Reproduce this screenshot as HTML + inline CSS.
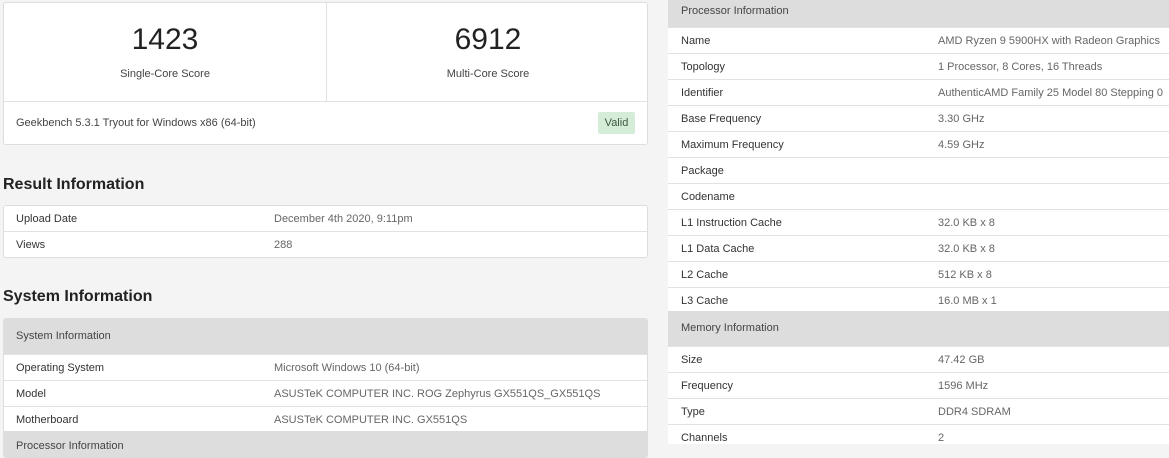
<!DOCTYPE html>
<html><head><style>
body{margin:0;width:1169px;height:444px;background:#f4f4f4;font-family:"Liberation Sans",sans-serif;position:relative;overflow:hidden;color:#333}
.a{position:absolute}
.card{background:#fff;border:1px solid #ddd;border-radius:3px;box-sizing:border-box}
.row{position:absolute;left:0;right:0;height:26px;border-top:1px solid #e2e2e2;font-size:11px;line-height:26px;background:#fff}
.row .l{position:absolute;left:12px}
.row .v{position:absolute;color:#666}
.hd{position:absolute;left:0;right:0;background:#ddd;font-size:11px;color:#444}
h2{position:absolute;margin:0;font-size:16px;font-weight:bold;color:#222}
</style></head><body>
<div class="a card" style="left:3px;top:2px;width:645px;height:143px">
 <div class="a" style="left:322px;top:0;width:1px;height:98px;background:#e2e2e2"></div>
 <div class="a" style="left:0;right:0;top:98px;height:1px;background:#e2e2e2"></div>
 <div class="a" style="left:0;width:322px;top:20px;text-align:center;font-size:30px;color:#222">1423</div>
 <div class="a" style="left:0;width:322px;top:65px;text-align:center;font-size:11px;color:#444">Single-Core Score</div>
 <div class="a" style="left:323px;width:322px;top:20px;text-align:center;font-size:30px;color:#222">6912</div>
 <div class="a" style="left:323px;width:322px;top:65px;text-align:center;font-size:11px;color:#444">Multi-Core Score</div>
 <div class="a" style="left:12px;top:114px;font-size:11px;color:#444">Geekbench 5.3.1 Tryout for Windows x86 (64-bit)</div>
 <div class="a" style="left:594px;top:109px;width:37px;height:22px;background:#d5ecd9;border-radius:2px;font-size:11px;line-height:22px;text-align:center;color:#3a5a3e">Valid</div>
</div>
<h2 style="left:3px;top:176px">Result Information</h2>
<div class="a card" style="left:3px;top:205px;width:645px;height:53px;overflow:hidden">
 <div class="row" style="top:-1px"><span class="l">Upload Date</span><span class="v" style="left:270px">December 4th 2020, 9:11pm</span></div>
 <div class="row" style="top:25px"><span class="l">Views</span><span class="v" style="left:270px">288</span></div>
</div>
<h2 style="left:3px;top:288px">System Information</h2>
<div class="a card" style="left:3px;top:318px;width:645px;height:140px;overflow:hidden;border-color:#ddd">
 <div class="hd" style="top:0;height:35px;line-height:35px;padding-left:12px">System Information</div>
 <div class="row" style="top:35px"><span class="l">Operating System</span><span class="v" style="left:270px">Microsoft Windows 10 (64-bit)</span></div>
 <div class="row" style="top:61px"><span class="l">Model</span><span class="v" style="left:270px">ASUSTeK COMPUTER INC. ROG Zephyrus GX551QS_GX551QS</span></div>
 <div class="row" style="top:87px"><span class="l">Motherboard</span><span class="v" style="left:270px">ASUSTeK COMPUTER INC. GX551QS</span></div>
 <div class="hd" style="top:112px;height:35px;line-height:30px;padding-left:12px">Processor Information</div>
</div>
<div class="a" style="left:668px;top:0;width:501px;height:444px;background:#fff;overflow:hidden">
 <div class="hd" style="top:0;height:27px;line-height:22px;padding-left:13px">Processor Information</div>
 <div class="row" style="top:27px"><span class="l" style="left:13px">Name</span><span class="v" style="left:270px">AMD Ryzen 9 5900HX with Radeon Graphics</span></div>
 <div class="row" style="top:53px"><span class="l" style="left:13px">Topology</span><span class="v" style="left:270px">1 Processor, 8 Cores, 16 Threads</span></div>
 <div class="row" style="top:79px"><span class="l" style="left:13px">Identifier</span><span class="v" style="left:270px">AuthenticAMD Family 25 Model 80 Stepping 0</span></div>
 <div class="row" style="top:105px"><span class="l" style="left:13px">Base Frequency</span><span class="v" style="left:270px">3.30 GHz</span></div>
 <div class="row" style="top:131px"><span class="l" style="left:13px">Maximum Frequency</span><span class="v" style="left:270px">4.59 GHz</span></div>
 <div class="row" style="top:157px"><span class="l" style="left:13px">Package</span></div>
 <div class="row" style="top:183px"><span class="l" style="left:13px">Codename</span></div>
 <div class="row" style="top:209px"><span class="l" style="left:13px">L1 Instruction Cache</span><span class="v" style="left:270px">32.0 KB x 8</span></div>
 <div class="row" style="top:235px"><span class="l" style="left:13px">L1 Data Cache</span><span class="v" style="left:270px">32.0 KB x 8</span></div>
 <div class="row" style="top:261px"><span class="l" style="left:13px">L2 Cache</span><span class="v" style="left:270px">512 KB x 8</span></div>
 <div class="row" style="top:287px"><span class="l" style="left:13px">L3 Cache</span><span class="v" style="left:270px">16.0 MB x 1</span></div>
 <div class="hd" style="top:311px;height:35px;line-height:34px;padding-left:13px">Memory Information</div>
 <div class="row" style="top:346px"><span class="l" style="left:13px">Size</span><span class="v" style="left:270px">47.42 GB</span></div>
 <div class="row" style="top:372px"><span class="l" style="left:13px">Frequency</span><span class="v" style="left:270px">1596 MHz</span></div>
 <div class="row" style="top:398px"><span class="l" style="left:13px">Type</span><span class="v" style="left:270px">DDR4 SDRAM</span></div>
 <div class="row" style="top:424px"><span class="l" style="left:13px">Channels</span><span class="v" style="left:270px">2</span></div>
</div>
</body></html>
